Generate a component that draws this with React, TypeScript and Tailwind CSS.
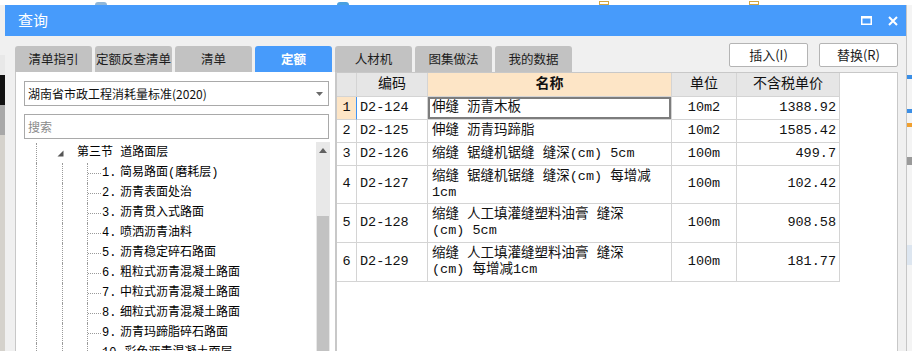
import type { ReactNode } from "react";

const tabs = ["清单指引", "定额反查清单", "清单", "定额", "人材机", "图集做法", "我的数据"];

const treeItems = [
  "简易路面(磨耗层)",
  "沥青表面处治",
  "沥青贯入式路面",
  "喷洒沥青油料",
  "沥青稳定碎石路面",
  "粗粒式沥青混凝土路面",
  "中粒式沥青混凝土路面",
  "细粒式沥青混凝土路面",
  "沥青玛蹄脂碎石路面",
  "彩色沥青混凝土面层",
];

interface Row {
  n: number;
  code: string;
  name: ReactNode;
  unit: string;
  price: string;
  tall?: boolean;
}

const rows: Row[] = [
  { n: 1, code: "D2-124", name: "伸缝 沥青木板", unit: "10m2", price: "1388.92" },
  { n: 2, code: "D2-125", name: "伸缝 沥青玛蹄脂", unit: "10m2", price: "1585.42" },
  { n: 3, code: "D2-126", name: "缩缝 锯缝机锯缝 缝深(cm) 5cm", unit: "100m", price: "499.7" },
  { n: 4, code: "D2-127", name: <>缩缝 锯缝机锯缝 缝深(cm) 每增减<br />1cm</>, unit: "100m", price: "102.42", tall: true },
  { n: 5, code: "D2-128", name: <>缩缝 人工填灌缝塑料油膏 缝深<br />(cm) 5cm</>, unit: "100m", price: "908.58", tall: true },
  { n: 6, code: "D2-129", name: <>缩缝 人工填灌缝塑料油膏 缝深<br />(cm) 每增减1cm</>, unit: "100m", price: "181.77", tall: true },
];

const rowHeights = ["h-[23px]", "h-[23px]", "h-[23px]", "h-[38px]", "h-[39px]", "h-[39px]"];

function VLine() {
  return <div className="w-px self-stretch border-l border-dotted border-[#9a9a9a]" />;
}

function TreeSection() {
  return (
    <div className="flex h-[20px] items-center">
      <div className="w-[20px]" />
      <VLine />
      <div className="w-[20px]" />
      <svg width="7" height="7" viewBox="0 0 7 7" className="shrink-0">
        <polygon points="6.5,0.5 6.5,6.5 0.5,6.5" fill="#555" />
      </svg>
      <div className="w-[13px]" />
      <span className="whitespace-pre">第三节 道路面层</span>
    </div>
  );
}

function TreeItem({ index, label }: { index: number; label: string }) {
  return (
    <div className="flex h-[20px] items-center">
      <div className="w-[20px]" />
      <VLine />
      <div className="w-[25px]" />
      <VLine />
      <div className="w-[24px]" />
      <VLine />
      <div className="w-[13px] border-t border-dotted border-[#9a9a9a]" />
      <span className="ml-[1px] min-w-[18px] whitespace-pre pr-[1px]">{index}.</span>
      <span className="whitespace-pre">{label}</span>
    </div>
  );
}

export default function App() {
  return (
    <div className="flex h-[351px] w-[912px] flex-col overflow-hidden bg-[#f0f0f0] font-['Noto_Sans_CJK_SC',sans-serif]">
      <div className="flex h-[5px] shrink-0 bg-white">
        <div className="ml-[95px] mt-[2px] h-[3px] w-[12px] rounded-t bg-[#8fb6d8]" />
        <div className="ml-[230px] mt-[2px] h-[3px] w-[12px] rounded-t bg-[#4aa0e0]" />
        <div className="ml-[250px] mt-[1px] h-[4px] w-[10px] border border-[#d4a640]" />
        <div className="ml-[140px] mt-[1px] h-[4px] w-[10px] border border-[#d4a640]" />
      </div>
      <div className="flex min-h-0 flex-1">
        <div className="flex w-[5px] shrink-0 flex-col">
          <div className="h-[50px] bg-[#f0f0f0]" />
          <div className="h-[20px] bg-[#e8e8e8]" />
          <div className="h-[30px] bg-[#111]" />
          <div className="h-[30px] bg-[#a8a8a8]" />
          <div className="flex-1 bg-[#d5d2cc]" />
        </div>

        <div className="flex w-[902px] shrink-0 flex-col border-r border-[#c6c6c6] bg-[#f0f0f0]">
          {/* title bar */}
          <div className="flex h-[31px] shrink-0 items-center bg-[#479bfb] pl-[13px] pr-[8px] text-[15px] text-white">
            <span>查询</span>
            <div className="ml-auto flex items-center gap-[16px]">
              <svg width="11" height="9" viewBox="0 0 11 9">
                <rect x="0.75" y="1" width="9.5" height="7.25" fill="none" stroke="white" strokeWidth="1.5" />
                <rect x="0" y="0" width="11" height="2.5" fill="white" />
              </svg>
              <svg width="10" height="10" viewBox="0 0 10 10">
                <path d="M1 1 L9 9 M9 1 L1 9" stroke="white" strokeWidth="2" />
              </svg>
            </div>
          </div>

          <div className="flex min-h-0 flex-1 flex-col pl-[10px] pr-[8px]">
            {/* tabs + buttons */}
            <div className="flex shrink-0 items-start justify-between pt-[7px]">
              <div className="mt-[3px] flex gap-[3px]">
                {tabs.map((t) => (
                  <div
                    key={t}
                    className={`flex h-[26px] w-[77px] items-center justify-center whitespace-nowrap rounded-t-[3px] text-[12.5px] ${
                      t === "定额" ? "bg-[#479bfb] font-bold text-white" : "bg-[#c2c2c2] text-[#1c1c1c]"
                    }`}
                  >
                    {t}
                  </div>
                ))}
              </div>
              <div className="flex gap-[11px]">
                {["插入(I)", "替换(R)"].map((b) => (
                  <div
                    key={b}
                    className="flex h-[24px] w-[79px] items-center justify-center rounded-[2px] border border-[#b4b4b4] bg-white text-[13px] text-[#1c1c1c]"
                  >
                    {b}
                  </div>
                ))}
              </div>
            </div>

            {/* panels */}
            <div className="flex min-h-0 flex-1">
              {/* left panel */}
              <div className="flex w-[321px] shrink-0 flex-col border-x border-[#c8c8c8] bg-white">
                <div className="ml-[8px] mt-[9px] flex h-[25px] w-[305px] items-center border border-[#a9a9a9] pl-[3px] pr-[5px] text-[12px] text-[#111]">
                  <span>湖南省市政工程消耗量标准(2020)</span>
                  <svg width="7" height="4" viewBox="0 0 7 4" className="ml-auto">
                    <polygon points="0,0 7,0 3.5,4" fill="#6a6a6a" />
                  </svg>
                </div>
                <div className="ml-[8px] mt-[8px] flex h-[25px] w-[305px] items-center border border-[#a9a9a9] pl-[3px] text-[12px] text-[#8a8a8a]">
                  搜索
                </div>
                <div className="mt-[3px] flex min-h-0 flex-1 pr-[5px]">
                  <div className="flex-1 overflow-hidden pt-[1px] font-['Liberation_Mono','Noto_Sans_CJK_SC',monospace] text-[12px] text-black">
                    <TreeSection />
                    {treeItems.map((label, i) => (
                      <TreeItem key={label} index={i + 1} label={label} />
                    ))}
                  </div>
                  <div className="flex w-[14px] shrink-0 flex-col bg-[#e8e8e8]">
                    <div className="flex h-[16px] items-center justify-center">
                      <svg width="8" height="5" viewBox="0 0 8 5">
                        <polygon points="0,5 8,5 4,0" fill="#606060" />
                      </svg>
                    </div>
                    <div className="mx-[1px] mt-[58px] flex-1 bg-[#c2c2c2]" />
                  </div>
                </div>
              </div>

              {/* right panel */}
              <div className="flex min-h-0 flex-1 flex-col border-x border-t border-[#c8c8c8] bg-white">
                <div className="grid w-[503px] grid-cols-[20px_71px_244px_65px_103px] font-['Liberation_Mono','Noto_Sans_CJK_SC',monospace] text-[13.5px] text-[#111]">
                  <div className="h-[24px] border-b border-r border-[#d4d4d4] bg-[#e6e6e6]" />
                  <div className="flex h-[24px] items-center justify-center border-b border-r border-[#d4d4d4] bg-[#e6e6e6] text-[14px]">编码</div>
                  <div className="flex h-[24px] items-center justify-center border-b border-r border-[#d4d4d4] bg-[#fde5c6] text-[14px] font-bold">名称</div>
                  <div className="flex h-[24px] items-center justify-center border-b border-r border-[#d4d4d4] bg-[#e6e6e6] text-[14px]">单位</div>
                  <div className="flex h-[24px] items-center justify-center border-b border-r border-[#d4d4d4] bg-[#e6e6e6] text-[14px]">不含税单价</div>

                  {rows.map((r, i) => {
                    const h = rowHeights[i];
                    const first = i === 0;
                    return (
                      <div key={r.code} className="contents">
                        <div
                          className={`flex ${h} items-center justify-center border-b border-r ${
                            first ? "border-r-[#3f93f5] bg-[#fde5c6]" : "border-[#d4d4d4]"
                          } border-b-[#d4d4d4]`}
                        >
                          {r.n}
                        </div>
                        <div className={`flex ${h} items-center border-b border-r border-[#d4d4d4] pl-[3px]`}>{r.code}</div>
                        <div
                          className={`flex ${h} ${r.tall ? "items-start pt-[3px] leading-[16px]" : "items-center"} whitespace-pre border-b border-r border-[#d4d4d4] pl-[4px] ${
                            first ? "shadow-[inset_0_0_0_2px_#7d7d7d]" : ""
                          }`}
                        >
                          <span>{r.name}</span>
                        </div>
                        <div className={`flex ${h} items-center justify-center border-b border-r border-[#d4d4d4]`}>{r.unit}</div>
                        <div className={`flex ${h} items-center justify-end border-b border-r border-[#d4d4d4] pr-[3px]`}>{r.price}</div>
                      </div>
                    );
                  })}
                </div>
              </div>
            </div>
          </div>
        </div>

        <div className="flex flex-1 flex-col bg-[#f4f4f4]">
          <div className="mt-[70px] h-[4px] bg-[#3a8ee6]" />
          <div className="mt-[30px] h-[4px] bg-[#3a8ee6]" />
          <div className="mt-[10px] h-[4px] bg-[#f0a030]" />
          <div className="mt-[30px] h-[8px] bg-[#9a9a9a]" />
          <div className="mt-[80px] h-[20px] bg-[#dde6f0]" />
        </div>
      </div>
    </div>
  );
}
